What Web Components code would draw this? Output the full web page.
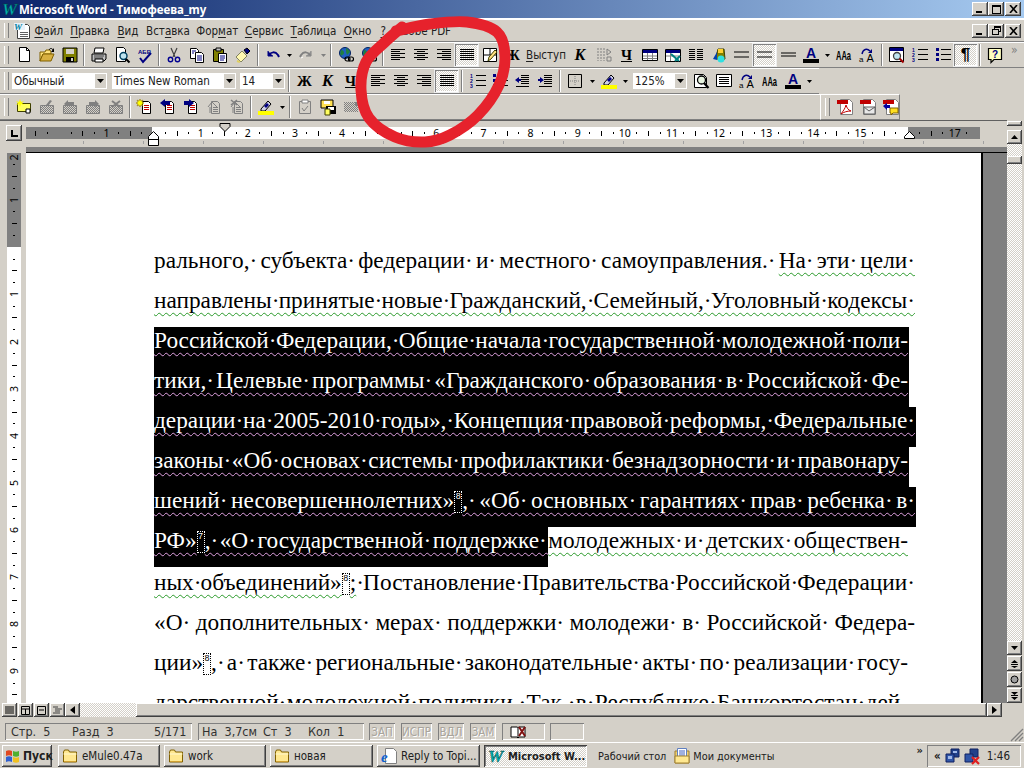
<!DOCTYPE html>
<html lang="ru"><head><meta charset="utf-8"><title>Microsoft Word</title>
<style>
html,body{margin:0;padding:0;width:1024px;height:768px;overflow:hidden;background:#d4d0c8;font:11.5px "DejaVu Sans Condensed","Noto Sans",sans-serif;color:#000}
</style></head><body>
<x-app>
<x-titlebar slot="x">Microsoft Word - Тимофеева_my</x-titlebar>
<x-menubar>
 <x-m u="Ф" r="айл" w="35.500"></x-m><x-m u="П" r="равка" w="47"></x-m><x-m u="В" r="ид" w="29"></x-m><x-m l="Вст" u="а" r="вка" w="51"></x-m><x-m l="Фор" u="м" r="ат" w="47.500"></x-m><x-m u="С" r="ервис" w="46.500"></x-m><x-m u="Т" r="аблица" w="52"></x-m><x-m u="О" r="кно" w="36"></x-m><x-m u="?" r="" w="15.500"></x-m><x-m r="Adobe PDF" w="64"></x-m>
</x-menubar>
<x-tb style="--h:26px">
 <x-btn i="new"></x-btn><x-btn i="open"></x-btn><x-btn i="save"></x-btn><x-sep></x-sep>
 <x-btn i="print"></x-btn><x-btn i="preview"></x-btn><x-btn i="spell"></x-btn><x-sep></x-sep>
 <x-btn i="cut"></x-btn><x-btn i="copy"></x-btn><x-btn i="paste"></x-btn><x-btn i="brush"></x-btn><x-sep w="7"></x-sep>
 <x-btn i="undo"></x-btn><x-btn i="drop" w="10"></x-btn><x-btn i="redo"></x-btn><x-btn i="dropg" w="11"></x-btn><x-sep w="6"></x-sep>
 <x-btn i="globe"></x-btn><x-btn i="globe"></x-btn><x-sep></x-sep>
 <x-btn i="al"></x-btn><x-btn i="ac"></x-btn><x-btn i="ar"></x-btn><x-btn i="aj" on></x-btn><x-btn i="tdraw"></x-btn>
 <x-btn t="b">Ж</x-btn><x-btn w="44"><x-u>В</x-u>ыступ</x-btn><x-btn t="bi" w="24">К</x-btn><x-btn i="gr"></x-btn><x-btn t="bu">Ч</x-btn>
 <x-btn i="table"></x-btn><x-btn i="xl"></x-btn><x-btn i="cols"></x-btn><x-btn i="art"></x-btn><x-btn i="eq2"></x-btn><x-btn i="eq2" on></x-btn><x-btn i="eq1"></x-btn>
 <x-btn i="fontA"></x-btn><x-btn i="drop" w="10"></x-btn><x-btn i="aaa"></x-btn><x-btn i="swap"></x-btn><x-sep w="7"></x-sep>
 <x-btn i="zoomdoc"></x-btn><x-btn i="num"></x-btn><x-btn i="bul"></x-btn><x-btn t="pil" on>¶</x-btn><x-sep></x-sep><x-btn i="help"></x-btn>
 <x-chev>»</x-chev>
</x-tb>
<x-tb style="--h:26px;--w:819px">
 <x-combo w="95" v="Обычный"></x-combo><x-spacer w="5"></x-spacer><x-combo w="124" v="Times New Roman"></x-combo><x-spacer w="4"></x-spacer><x-combo w="45" v="14"></x-combo><x-sep w="8"></x-sep>
 <x-btn t="b">Ж</x-btn><x-btn t="bi">К</x-btn><x-btn t="bu">Ч</x-btn><x-sep w="4"></x-sep>
 <x-btn i="al"></x-btn><x-btn i="ac"></x-btn><x-btn i="ar"></x-btn><x-btn i="aj" on></x-btn><x-sep w="8"></x-sep>
 <x-btn i="num"></x-btn><x-btn i="bul" w="21"></x-btn><x-btn i="outd"></x-btn><x-btn i="ind"></x-btn><x-sep w="7"></x-sep>
 <x-btn i="border"></x-btn><x-btn i="drop" w="11"></x-btn><x-btn i="hl"></x-btn><x-btn i="drop" w="10"></x-btn><x-spacer w="3"></x-spacer>
 <x-combo w="54" v="125%"></x-combo><x-spacer w="2"></x-spacer><x-btn i="zoomdoc2"></x-btn><x-btn i="lines"></x-btn><x-btn i="swap"></x-btn><x-btn i="aaa"></x-btn><x-btn i="fontA"></x-btn><x-btn i="drop" w="10"></x-btn>
</x-tb>
<x-row>
 <x-tb style="--h:26px;--w:820px">
  <x-btn i="cmt"></x-btn><x-btn i="cmtg"></x-btn><x-btn i="cmtl"></x-btn><x-btn i="cmtr"></x-btn><x-btn i="cmtx"></x-btn><x-sep></x-sep>
  <x-btn i="trk"></x-btn><x-btn i="trkl"></x-btn><x-btn i="trkr"></x-btn><x-btn i="trkg"></x-btn><x-btn i="trkx"></x-btn><x-sep></x-sep>
  <x-btn i="hl"></x-btn><x-btn i="drop" w="10"></x-btn><x-sep></x-sep><x-btn i="clip"></x-btn><x-btn i="docsv"></x-btn><x-btn i="grb"></x-btn>
 </x-tb>
 <x-tb style="--h:26px;--w:80px" band><x-btn i="pdf"></x-btn><x-btn i="pdfm"></x-btn><x-btn i="pdfc"></x-btn></x-tb>
</x-row>
<x-main>
 <x-line w="761">ральногo,· субъекта· федерации· и· местного· самоуправления.· <x-w>На· эти· цели·</x-w></x-line>
 <x-line w="761" wave="g">направлены· принятые· новые· Гражданский,· Семейный,· Уголовный· кодексы·</x-line>
 <x-line w="754" sel wave="p">Российской· Федерации,· Общие· начала· государственной· молодежной· поли-</x-line>
 <x-line w="754" sel wave="p">тики,· Целевые· программы· «Гражданского· образования· в· Российской· Фе-</x-line>
 <x-line w="761" sel wave="p">дерации· на· 2005-2010· годы»,· Концепция· правовой· реформы,· Федеральные·</x-line>
 <x-line w="754" sel wave="p">законы· «Об· основах· системы· профилактики· безнадзорности· и· правонару-</x-line>
 <x-line w="761" sel wave="p">шений· несовершеннолетних»<x-fn>8</x-fn>,· «Об· основных· гарантиях· прав· ребенка· в·</x-line>
 <x-line w="754"><x-sel>РФ»<x-fn>7</x-fn>,· «О· государственной· поддержке· </x-sel><x-w>молодежных· и· детских· обществен-</x-w></x-line>
 <x-line w="761" style="margin-top:2px"><x-w>ных· объединений»<x-fn>8</x-fn>;</x-w>· Постановление· Правительства· Российской· Федерации·</x-line>
 <x-line w="761">«О· дополнительных· мерах· поддержки· молодежи· в· Российской· Федера-</x-line>
 <x-line w="754">ции»<x-fn>8</x-fn>,· а· также· региональные· законодательные· акты· по· реализации· госу-</x-line>
 <x-line w="754">дарственной· молодежной· политики.· Так,· в· Республике· Башкортостан· дей-</x-line>
</x-main>
<x-status></x-status>
<x-taskbar></x-taskbar>
<x-scribble></x-scribble>
</x-app>
<script>
const UI='"DejaVu Sans Condensed","Noto Sans",sans-serif';
const DITH='repeating-conic-gradient(#fff 0 25%,#d4d0c8 0 50%) 0 0/2px 2px';
const raised='box-shadow:inset -1px -1px #404040,inset 1px 1px #fff,inset -2px -2px #808080;';
const sunken='box-shadow:inset 1px 1px #808080,inset -1px -1px #fff;';
const lines=(a,c='#000')=>a.map(([x,y,w])=>`<rect x="${x}" y="${y}" width="${w}" height="1" fill="${c}"/>`).join('');
const page='<path d="M3.500 .5h7l3 3v11h-10z" fill="#fff" stroke="#000"/><path d="M10.500 .5v3h3" fill="none" stroke="#000"/>';
const gd=`<pattern id="gd" width="2" height="2" patternUnits="userSpaceOnUse"><rect width="2" height="2" fill="#d4d0c8"/><rect width="1" height="1" fill="#808080"/><rect x="1" y="1" width="1" height="1" fill="#808080"/></pattern>`;
const trk=(a)=>`<path d="M5.500 2.500h6l2 2v10h-8z" fill="#fff" stroke="#000"/>`+lines([[7,6,5],[7,8,5],[7,10,5]],'#c00000')+a;
const trkg=`<path d="M5.500 2.500h6l2 2v10h-8z" fill="#d4d0c8" stroke="#808080"/><path d="M2 8l4-5 5 5M4 8v6" fill="none" stroke="#808080"/>`+lines([[7,8,5],[7,10,5],[7,12,5]],'#808080');
const I={
new:page,
mdoc:'<path d="M3.500 1.500h10l2 2v12h-12z" fill="#fff" stroke="#404040"/>'+lines([[6,9,8],[6,11,8],[6,13,8]],'#606060')+'<rect x="0" y="0" width="11" height="7" fill="#e8f0f8"/><text x="0" y="7" font-size="9" font-weight="700" font-style="italic" font-family="Liberation Serif" fill="#0080a0">W</text>',
open:'<path d="M1 5h5l1-2h4l1 2v2H4L1 14z" fill="#ffe27a" stroke="#806000"/><path d="M1 14l3-7h11l-3 7z" fill="#d8b040" stroke="#806000"/><path d="M10 3c1-2 3-2 4 0" fill="none" stroke="#000"/><path d="M15 1v4h-3z"/>',
save:'<path d="M1 1h14v14H1z" fill="#808000" stroke="#000"/><path d="M4 2h8v5H4z" fill="#d4d0c8"/><path d="M4 10h8v5H4z" fill="#000"/><path d="M9 11h2v3H9z" fill="#d4d0c8"/>',
print:'<path d="M4 1h9l-1 5H3z" fill="#fff" stroke="#000"/><path d="M1 7h14v5l-2 2H1z" fill="#c0c0c0" stroke="#000"/><path d="M3 9h10M3 11h9" stroke="#404040"/><path d="M4 12h8v3H4z" fill="#fff" stroke="#000"/>',
preview:'<path d="M2.500 .5h7l2 2v12h-9z" fill="#fff" stroke="#000"/><circle cx="9.500" cy="9" r="3.500" fill="#bfe4f0" stroke="#004060" stroke-width="1.400"/><path d="M12 12l3.500 3.500" stroke="#000" stroke-width="2"/>',
spell:'<text x="1" y="6.500" font-size="6" font-weight="700" font-family="Liberation Sans" fill="#000080">АБВ</text><path d="M3 11l3 4 8-9" fill="none" stroke="#000080" stroke-width="2"/>',
cut:'<path d="M5 1l4 9M11 1L7 10" stroke="#404040" stroke-width="1.200"/><circle cx="4.500" cy="12.500" r="2.200" fill="none" stroke="#000090" stroke-width="1.400"/><circle cx="11.500" cy="12.500" r="2.200" fill="none" stroke="#000090" stroke-width="1.400"/>',
copy:'<path d="M1.500 1.500h6l2 2v8h-8z" fill="#fff" stroke="#000"/><path d="M6.500 5.500h6l2 2v8h-8z" fill="#fff" stroke="#000"/><path d="M3 4h4M3 6h2M8 9h5M8 11h5M8 13h5" stroke="#000080"/>',
paste:'<path d="M1.500 2.500h10v12h-10z" fill="#808000" stroke="#000"/><path d="M4 1h5v3H4z" fill="#c0c0c0" stroke="#000"/><path d="M6.500 6.500h8v9h-8z" fill="#fff" stroke="#000"/><path d="M8 9h5M8 11h5M8 13h4" stroke="#000080"/>',
brush:'<path d="M1 10l6-6 5 5-6 6z" fill="#fff8b0" stroke="#808060"/><path d="M9 3l3-2 3 3-3 3z" fill="#000080" stroke="#000"/><path d="M2 14l3 1" stroke="#e0d060" stroke-width="2"/>',
undo:'<path d="M3 4v5h5" fill="#000080" stroke="#000080"/><path d="M4 8c2-3 6-4 9 0l1 2" fill="none" stroke="#000080" stroke-width="2"/>',
redo:'<path d="M13 4v5H8" fill="#a0a0a0" stroke="#808080"/><path d="M12 8c-2-3-6-4-9 0l-1 2" fill="none" stroke="#808080" stroke-width="2"/><path d="M3 11l2-1" stroke="#fff"/>',
drop:'<path d="M-1 7h5l-2.500 3z" transform="translate(7)"/>',
dropg:'<path d="M-1 7h5l-2.500 3z" transform="translate(7)" fill="#808080"/>',
globe:'<circle cx="7" cy="6" r="5.500" fill="#2060c0" stroke="#002060"/><path d="M3 3c2 0 3 1 3 3s-2 1-2 3l-2-2zM8 1c2 2 3 1 4 4l-3 3-1-3z" fill="#208040"/><rect x="7" y="10" width="5" height="4" rx="2" fill="none" stroke="#000" stroke-width="1.200"/><rect x="10.500" y="10" width="5" height="4" rx="2" fill="none" stroke="#000" stroke-width="1.200"/>',
al:lines([[1,2,14],[1,4,9],[1,6,14],[1,8,9],[1,10,14],[1,12,9]]),
ac:lines([[1,2,14],[4,4,8],[1,6,14],[4,8,8],[1,10,14],[4,12,8]]),
ar:lines([[1,2,14],[6,4,9],[1,6,14],[6,8,9],[1,10,14],[6,12,9]]),
aj:lines([[1,2,14],[1,4,14],[1,6,14],[1,8,14],[1,10,14],[1,12,14]]),
tdraw:'<path d="M1.500 1.500h13v13h-13zM1.500 8h13M8 1.500V8" fill="#fff" stroke="#000"/><path d="M6 14l1-4 6-7 2 2-6 7z" fill="#ffe080" stroke="#404000"/>',
gr:'<path d="M2 1v13M5 1v13M8 1v13" stroke="#808080" stroke-dasharray="2 1"/><path d="M11 2l4 3-4 3zM11 10h4v4h-4z" fill="#d4d0c8" stroke="#808080"/>',
table:'<path d="M.5 2.500h15v11H.5z" fill="#fff" stroke="#000"/><path d="M1 3h14v3H1z" fill="#000080"/><path d="M1 9h14M1 11.500h14M5.500 6v7M10.500 6v7" stroke="#808080"/>',
xl:'<path d="M.5 2.500h15v12H.5z" fill="#fff" stroke="#000"/><path d="M1 3h14v3H1z" fill="#000080"/><path d="M1 9h14M5.500 6v8" stroke="#808080"/><path d="M6 7l8 7M10 14l5-5" stroke="#008080" stroke-width="2"/>',
cols:lines([[1,2,6],[1,4,6],[1,6,6],[1,8,6],[1,10,6],[1,12,6],[9,2,6],[9,4,6],[9,6,6],[9,8,6],[9,10,6],[9,12,6]]),
art:'<path d="M7 2h6l1 10-6 2-3-4z" fill="#808000" stroke="#404000"/><path d="M7 2h5v4H7z" fill="#ffd030"/><path d="M2 12l4-7v8z" fill="#0040b0"/><circle cx="10" cy="12" r="3.500" fill="#30e0e0"/>',
eq2:'<path d="M0 5h15M0 10h15" stroke="#000" stroke-width="1.200"/>',
eq1:'<path d="M1 6h15M1 9h15" stroke="#000"/>',
fontA:'<text x="8" y="11" text-anchor="middle" font-size="14" font-weight="700" font-family="Liberation Sans" fill="#000080">A</text><rect x="0" y="12" width="16" height="4" fill="#000"/>',
aaa:'<g transform="scale(.58 1)"><text x="0" y="13" font-size="13" font-weight="700" font-family="Liberation Sans">AAa</text></g>',
swap:'<path d="M3 7C4 2 8 1 11 4" fill="none" stroke="#000080" stroke-width="1.400"/><path d="M13 2v4H9z" fill="#000080"/><text x="0" y="14.500" font-size="8" font-family="Liberation Sans">a<tspan dx="3" font-size="11">A</tspan></text>',
zoomdoc:'<path d="M.5 .5h14v14H.5z" fill="#fff" stroke="#000"/><path d="M1 1h13v3H1z" fill="#000080"/><circle cx="8" cy="9" r="3.500" fill="#bfe4f0" stroke="#404040" stroke-width="1.300"/><path d="M10.500 11.500l4 4" stroke="#a00000" stroke-width="2"/>',
zoomdoc2:'<path d="M1.500 1.500h9l3 3v10h-12z" fill="#fff" stroke="#000"/><circle cx="8.500" cy="7" r="4" fill="#e8f4e0" stroke="#000" stroke-width="1.300"/><path d="M11 10l4.500 5" stroke="#000" stroke-width="2.200"/>',
num:'<text x="0" y="5" font-size="5" fill="#000080" font-weight="700" font-family="Liberation Sans">1</text><text x="0" y="10" font-size="5" fill="#000080" font-weight="700" font-family="Liberation Sans">2</text><text x="0" y="15" font-size="5" fill="#000080" font-weight="700" font-family="Liberation Sans">3</text>'+lines([[6,2,10],[6,7,10],[6,12,10]]),
bul:'<path d="M1 1h3v3H1zM1 6h3v3H1zM1 11h3v3H1z" fill="#000080"/>'+lines([[6,2,10],[6,7,10],[6,12,10]]),
outd:lines([[7,2,8],[7,4,8],[7,6,8],[7,8,8],[7,10,8],[2,13,13]])+'<path d="M1 7l4-3v2h2v2H5v2z" fill="#000080"/>',
ind:lines([[7,2,8],[7,4,8],[7,6,8],[7,8,8],[7,10,8],[2,13,13]])+'<path d="M7 7L3 4v2H1v2h2v2z" fill="#000080"/>',
border:'<path d="M1.500 1.500h13v13h-13z" fill="none" stroke="#000"/><path d="M8 3v10M3 8h10" stroke="#808080" stroke-dasharray="1 1"/>',
hl:'<path d="M3 10L10 2l3 3-6 7H3z" fill="#d0d0e8" stroke="#000"/><path d="M6 7l3-3 2 2-3 3z" fill="#000080"/><rect y="12" width="16" height="4" fill="#ffff00"/>',
lines:'<path d="M.5 1.500h15v12H.5z" fill="#fff" stroke="#000"/>'+lines([[3,4,10],[3,6,10],[3,8,10],[3,10,10]]),
help:'<path d="M1.500 1.500h13v11H7l-3 3v-3H1.500z" fill="#ffffc0" stroke="#000" stroke-width="1.200"/><text x="8" y="11" text-anchor="middle" font-size="10" font-weight="700" font-family="Liberation Sans" fill="#000080">?</text>',
cmt:'<path d="M1.500 4.500h13v8h-13z" fill="#ffff60" stroke="#404000"/><path d="M10 10h4v4h-4z" fill="#fff" stroke="#000"/><path d="M4 0l1 3 3-1-2 2 2 2-3-1-1 3-1-3-3 1 2-2-2-2 3 1z" fill="#ffff00"/>',
cmtg:gd+'<path d="M1.500 6.500h13v8h-13z" fill="url(#gd)" stroke="#808080"/><path d="M7 6l4-5 2 1-4 5z" fill="#808080"/>',
cmtl:gd+'<path d="M1.500 6.500h13v8h-13z" fill="url(#gd)" stroke="#808080"/><path d="M2 5l4-4v2h6v3H6v2z" fill="#808080"/>',
cmtr:gd+'<path d="M1.500 6.500h13v8h-13z" fill="url(#gd)" stroke="#808080"/><path d="M14 5l-4-4v2H4v3h6v2z" fill="#808080"/>',
cmtx:gd+'<path d="M1.500 6.500h13v8h-13z" fill="url(#gd)" stroke="#808080"/><path d="M4 2l8 6M12 2L4 8" stroke="#808080" stroke-width="2"/>',
trk:trk('<path d="M3 0l1 2 2-1-1 2 2 1-2 1 1 2-2-1-1 2-1-2-2 1 1-2-2-1 2-1-1-2 2 1z" fill="#ffff00" stroke="#806000" stroke-width=".5"/>'),
trkl:trk('<path d="M0 4l5-4v2h5v4H5v2z" fill="#000080"/>'),
trkr:trk('<path d="M11 4L6 0v2H1v4h5v2z" fill="#000080"/>'),
trkg:trkg,
trkx:trkg+'<path d="M2 1l6 5M8 1L2 6" stroke="#808080" stroke-width="1.500"/>',
clip:'<path d="M2.500 2.500h11v12h-11z" fill="#d4d0c8" stroke="#808080"/><path d="M5 1h6v3H5z" fill="#fff" stroke="#808080"/><path d="M5 9l2 3 4-5" fill="none" stroke="#808080"/>',
docsv:'<path d="M1 1h12v8H1z" fill="#ffe050" stroke="#000"/><path d="M4 2h6v3H4z" fill="#fff"/><path d="M6 7h10v8H6z" fill="#000"/><path d="M8 8h6v3H8z" fill="#fff"/><path d="M5 10h5v6H5z" fill="#ffff60" stroke="#404000"/>',
grb:gd+'<path d="M1 3h14v10H1z" fill="url(#gd)"/><path d="M12 3h4v4h-4z" fill="#808080"/>',
pdf:'<path d="M3.500 .5h9l3 3v12h-12z" fill="#fff" stroke="#808080"/><rect y="1" width="11" height="4" fill="#c00000"/><path d="M9 6c-1 4-3 6-5 9 3-2 6-3 10-3-3-1-4-3-5-6z" fill="none" stroke="#c00000"/>',
pdfm:'<path d="M3.500 .5h9l3 3v12h-12z" fill="#fff" stroke="#808080"/><rect y="1" width="11" height="4" fill="#c00000"/><path d="M4 8h11v7H4z" fill="#e8e8e8" stroke="#606060"/><path d="M4 8l5 4 6-4" fill="none" stroke="#606060"/>',
pdfc:'<path d="M3.500 .5h9l3 3v12h-12z" fill="#fff" stroke="#808080"/><rect y="1" width="11" height="4" fill="#c00000"/><path d="M0 7l4-3v2h3v3H4v2z" fill="#0000a0"/><path d="M7 9h8v5H10l-2 2v-2H7z" fill="#ffe020" stroke="#806000"/>',
folder:'<path d="M1.500 4l1-2h4l1 2h7v10h-13z" fill="#ffe890" stroke="#806000"/><path d="M1.500 6h13" stroke="#fff8d0"/><path d="M2 13.500h12" stroke="#d0a030"/>',
ie:'<path d="M4.500 .5h8l3 3v12h-11z" fill="#fff" stroke="#808080"/><text x="0" y="14" font-size="15" font-weight="700" font-style="italic" font-family="Liberation Serif" fill="#1060d0">e</text>',
wordw:'<text x="0" y="14" font-size="17" font-weight="700" font-style="italic" font-family="Liberation Serif" fill="#00b0b0" stroke="#004040" stroke-width=".4">W</text>',
flag:'<path d="M1 3c2-1 4-1 6 0v5c-2-1-4-1-6 0z" fill="#e04820"/><path d="M8 3c2 1 4 1 6 0v5c-2 1-4 1-6 0z" fill="#50b030"/><path d="M1 9c2-1 4-1 6 0v5c-2-1-4-1-6 0z" fill="#3060d0"/><path d="M8 9c2 1 4 1 6 0v5c-2 1-4 1-6 0z" fill="#f0c020"/>',
docs:'<path d="M1 3h14v12H1z" fill="#f0d070" stroke="#a08030"/><path d="M3.500 .5h9v11h-9z" fill="#fff" stroke="#6080c0"/><path d="M5 3h6M5 5h6M5 7h6" stroke="#4060c0"/><path d="M1 8h14v7H1z" fill="#ffe890" stroke="#a08030"/>',
net:'<path d="M6 1h8v8H6z" fill="#20408a" stroke="#102060"/><path d="M1 6h8v8H1z" fill="#3056a8" stroke="#102060"/><path d="M3 8h4v3H3z" fill="#a0b8e8"/><path d="M8 3h4v2H8z" fill="#a0b8e8"/>',
netx:'<path d="M6 1h8v8H6z" fill="#20408a" stroke="#102060"/><path d="M1 6h8v8H1z" fill="#3056a8" stroke="#102060"/><path d="M8 9l7 7M15 9l-7 7" stroke="#e02020" stroke-width="2.200"/>',
book:'<path d="M1 3h6c1 0 1 1 1 1s0-1 1-1h6v10H9l-1 1-1-1H1z" fill="#fff" stroke="#000"/><path d="M8 4v9" stroke="#000"/><path d="M9 3l6 9M15 3l-6 9" stroke="#801010" stroke-width="2"/>',
};
const svg=(n,s=16)=>`<svg width="${s}" height="${s}" viewBox="0 0 16 16" style="display:block;overflow:visible">${I[n]||''}</svg>`;
function def(name,css,html,extra={}){
 class E extends HTMLElement{
  constructor(){super();this.attachShadow({mode:'open'})}
  connectedCallback(){const a=n=>this.getAttribute(n);this.shadowRoot.innerHTML=`<style>${css}</style>`+(typeof html==='function'?html(a,this):html);if(extra.init)extra.init(this,a)}
 }
 customElements.define(name,E);
}
def('x-app',':host{display:flex;flex-direction:column;width:1024px;height:768px;position:relative;overflow:hidden;background:#d4d0c8}','<slot name="x"></slot><slot></slot>');
const capBtn=(g)=>`<span class="cb">${g}</span>`;
const CB=`.cb{width:16px;height:14px;background:#d4d0c8;${raised}display:flex;align-items:center;justify-content:center}`;
const gMin='<svg width="8" height="8"><rect y="6" width="6" height="2"/></svg>',gMax='<svg width="9" height="9"><path d="M0 0h9v9H0zM1 2v6h7V2z" fill-rule="evenodd"/></svg>',gRes='<svg width="9" height="9"><path d="M2 0h7v6H7v3H0V3h2zM3 1v1h5v3H7V3H3zM1 4v4h5V4z" fill-rule="evenodd"/></svg>',gX='<svg width="9" height="8"><path d="M1 0l7 8M8 0L1 8" stroke="#000" stroke-width="1.600"/></svg>';
def('x-titlebar',`:host{display:flex;align-items:center;height:18px;flex:none;background:linear-gradient(90deg,#0a246a 0,#a6caf0 100%);color:#fff;font:700 11.5px "Noto Sans",sans-serif;border-bottom:1px solid #fff}
 .ic{width:16px;margin:0 0 0 2px}.t{flex:1;white-space:nowrap;margin-left:1px}.btns{display:flex;margin-right:3px}${CB}.cb:last-child{margin-left:1px}`,
 ()=>`<span class="ic">${svg('wordw')}</span><span class="t"><slot></slot></span><span class="btns">${capBtn(gMin)}${capBtn(gMax)}${capBtn(gX)}</span>`);
const GRIP=`<span class="gr"></span>`;
const GRIPC=`.gr{width:3px;height:calc(100% - 6px);margin:0 3px 0 4px;flex:none;border-left:1px solid #fff;border-right:1px solid #808080;background:#d4d0c8}`;
def('x-menubar',`:host{display:flex;align-items:center;height:23px;flex:none;border-bottom:1px solid #808080;box-sizing:border-box;border-top:1px solid #fff}${GRIPC}
 .g{display:flex;align-items:center;height:100%;flex:1}.doc{margin:0 1px 0 2px;width:16px;flex:none}.btns{display:flex;margin-right:3px}${CB}.cb:last-child{margin-left:1px}`,
 ()=>`${GRIP}<span class="doc">${svg('mdoc')}</span><span class="g"><slot></slot></span><span class="btns">${capBtn(gMin)}${capBtn(gRes)}${capBtn(gX)}</span>`);
def('x-m',':host{display:inline-block;text-align:center;white-space:nowrap;color:#202020;flex:none}u{text-underline-offset:2px}',(a,t)=>{t.style.width=a('w')+'px';return `${a('l')||''}<u>${a('u')||''}</u>${a('r')||''}`});
def('x-u',':host{text-decoration:underline;text-underline-offset:2px}','<slot></slot>');
def('x-tb',`:host{display:flex;align-items:center;height:var(--h);width:var(--w,100%);flex:none;box-sizing:border-box;border-top:1px solid #fff;border-bottom:1px solid #808080;position:relative}
 :host([band]){border-left:1px solid #fff;border-right:1px solid #808080}${GRIPC}`,`${GRIP}<slot></slot>`);
def('x-row',':host{display:flex;height:26px;flex:none;width:100%}','<slot></slot>');
def('x-sep',':host{display:flex;justify-content:center;height:22px;align-items:center;flex:none}i{width:0;height:22px;border-left:1px solid #808080;border-right:1px solid #fff}',(a,t)=>{t.style.width=(a('w')||6)+'px';return '<i></i>'});
def('x-spacer',':host{display:block;flex:none}','',{init:(t,a)=>t.style.width=a('w')+'px'});
def('x-chev',`:host{margin-left:5px;color:#808080;font:12px ${UI};align-self:flex-start;letter-spacing:0}`,'<slot></slot>');
def('x-btn',`:host{display:flex;align-items:center;justify-content:center;width:23px;height:22px;flex:none;box-sizing:border-box;white-space:nowrap;color:#202020}
 :host([on]){background:${DITH};box-shadow:inset 1px 1px #808080,inset -1px -1px #fff,0 0 0 1px #eee}
 .b{font:700 15px "Liberation Serif",serif;color:#000}.bi{font:italic 700 16px "Liberation Serif",serif;color:#000}.bu{font:700 15px "Liberation Serif",serif;text-decoration:underline;color:#000}.pil{font:700 17px "Liberation Sans",sans-serif;color:#000}`,
 (a,t)=>{if(a('w'))t.style.width=a('w')+'px';const i=a('i');return i?svg(i):a('t')?`<span class="${a('t')}"><slot></slot></span>`:'<slot></slot>'});
def('x-combo',`:host{display:flex;height:16px;box-sizing:border-box;flex:none;background:#fff;font:11.5px ${UI};align-items:center;padding-left:2px;white-space:nowrap;overflow:hidden;color:#222}
 .v{flex:1}.d{width:13px;height:100%;background:#d4d0c8;display:flex;align-items:center;justify-content:center;border:1px solid #fff;box-sizing:border-box}`,
 (a,t)=>{t.style.width=a('w')+'px';return `<span class="v">${a('v')}</span><span class="d"><svg width="7" height="4"><path d="M0 0h7L3.500 4z"/></svg></span>`});
/* ruler */
const Q=47.13/4;
function ticks(from,to){let h='';for(let k=from;k<=to;k++){const m=((k%4)+4)%4;let c='';
 if(m===0&&k!==0&&k!==64&&k!==-8)c=`<b>${Math.abs(k/4)}</b>`;else if(m===2)c='<i class="l"></i>';else if(m)c='<i class="d"></i>';
 h+=`<span class="c">${c}</span>`}return h}
def('x-hruler',`:host{display:block;height:32px;flex:none;position:relative;border-top:1px solid #606060;box-sizing:border-box}
 .top{display:flex;height:18px;align-items:flex-end;padding-left:6px}
 .tab{width:16px;height:16px;margin:0 4px 0 0;${raised}display:flex;align-items:center;justify-content:center;align-self:flex-start;margin-top:4px;flex:none}
 .strip{width:954px;height:12px;flex:none;overflow:hidden;display:flex;align-items:center;padding-left:3.900px;box-sizing:border-box;background:linear-gradient(90deg,#808080 126px,#fff 126px,#fff 882px,#808080 882px)}
 .c{width:${Q}px;flex:none;display:flex;align-items:center;justify-content:center;font:10.5px "Noto Sans",sans-serif;color:#000}.c b{font-weight:400}
 .d{width:1px;height:2px;background:#000}.l{width:1px;height:5px;background:#000}
 .mid{height:8px;margin-left:26px;background:repeating-linear-gradient(90deg,transparent 0 59px,#a0a0a0 59px 60px) -2px 2px/100% 3px no-repeat}
 .band{height:5px;margin-left:26px;background:#808080}
 .mk{position:absolute}`,
 ()=>`<div class="top"><span class="tab"><svg width="8" height="8"><path d="M1 1h2v5h5v2H1z"/></svg></span><div class="strip">${ticks(-10,69)}</div></div><div class="mid"></div><div class="band"></div>
 <svg class="mk" style="left:147px;top:10px" width="13" height="16"><path d="M6.500 .5l5 5v9h-10v-9z" fill="#fff" stroke="#000"/><path d="M1 8.500h11" stroke="#000"/></svg>
 <svg class="mk" style="left:219px;top:2px" width="13" height="10"><path d="M1 .5h10v3l-5 5-5-5z" fill="#d4d0c8" stroke="#000"/></svg>
 <svg class="mk" style="left:903px;top:10px" width="13" height="9"><path d="M6.500 .5l5 5v2h-10v-2z" fill="#fff" stroke="#000"/></svg>`);
def('x-vruler',`:host{display:block;width:26px;flex:none;padding-left:7px;box-sizing:border-box;overflow:hidden}
 .s{width:14px;height:100%;overflow:hidden;background:linear-gradient(180deg,#808080 94px,#fff 94px);display:flex;flex-direction:column;align-items:center;margin-top:1px}
 .c{height:${Q}px;flex:none;display:flex;align-items:center;justify-content:center;font:10.5px "Noto Sans",sans-serif;width:14px}.c b{font-weight:400;transform:rotate(-90deg)}
 .two{height:${Q/2}px;flex:none;font:10.5px/${Q/2+3}px "Noto Sans",sans-serif;overflow:visible;text-align:center}.two b{font-weight:400;display:inline-block;transform:rotate(-90deg)}
 .d{width:2px;height:1px;background:#000}.l{width:5px;height:1px;background:#000}`,()=>`<div class="s"><span class="two"><b>2</b></span>${ticks(-7,38)}</div>`);
def('x-main',`:host{display:block;height:583px;flex:none;overflow:hidden}
 .g{display:flex;height:583px}.left{display:flex;flex-direction:column;width:1007px;flex:none}
 .body{display:flex;height:551px;flex:none}
 .pagewrap{display:flex;flex:1;border-top:1px solid #000;background:#808080}
 .page{background:#fff;border-right:2px solid #000;padding:94px 0 0 128px;box-sizing:border-box;width:957px;overflow:hidden;flex:none}`,
 ()=>`<div class="g"><div class="left"><x-hruler></x-hruler><div class="body"><x-vruler></x-vruler><div class="pagewrap"><div class="page"><slot></slot></div></div></div></div><x-vscroll></x-vscroll></div>`);
const sb=`background:#d4d0c8;${raised}display:flex;align-items:center;justify-content:center;flex:none;`;
def('x-vscroll',`:host{display:flex;flex-direction:column;width:17px;height:583px;flex:none;box-sizing:border-box;padding:0 2px 0 0}
 .sp{height:5px;margin-top:1px;${raised}flex:none}.gap{height:4px;flex:none}
 .a{height:14px;${sb}}.track{flex:1;background:${DITH};display:flex;flex-direction:column}
 .th{height:8px;margin-top:12px;${sb}}.x{height:15px;margin-top:1px;${sb}}`,
 ()=>`<div class="sp"></div><div class="gap"></div><div class="a"><svg width="7" height="4"><path d="M3.500 0L7 4H0z"/></svg></div><div class="track"><div class="th"></div></div>
 <div class="a"><svg width="7" height="4"><path d="M0 0h7L3.500 4z"/></svg></div>
 <div class="x"><svg width="7" height="8"><path d="M3.500 0L7 3H0zM0 4h7v1H0zM0 6h7L3.500 8z" /></svg></div>
 <div class="x"><svg width="9" height="9"><circle cx="4.500" cy="4.500" r="3.500" fill="#a0a0a0" stroke="#000"/></svg></div>
 <div class="x"><svg width="7" height="8"><path d="M3.500 8L7 5H0zM0 3h7v1H0zM0 0h7L3.500 3z"/></svg></div>`);
def('x-line',`:host{display:block;height:40px;font:23.3px/26px "Liberation Serif",serif;white-space:pre;color:#000;box-sizing:border-box;padding-bottom:14px}
 :host([sel]){background:#000;color:#fff}
 :host([wave=g]) span{text-decoration:underline wavy #2a9a2a 1px;text-underline-offset:4px;text-decoration-skip-ink:none}
 :host([wave=p]) span{text-decoration:underline wavy #e0a0e0 1px;text-underline-offset:4px;text-decoration-skip-ink:none}`,
 '<span id="t"><slot></slot></span>',{init:(t,a)=>{t.style.width=(+a('w')+1)+'px'}});
def('x-w',':host{text-decoration:underline wavy #2a9a2a 1px;text-underline-offset:4px;text-decoration-skip-ink:none}','<slot></slot>');
def('x-sel',':host{display:inline-block;background:#000;color:#fff;padding-bottom:14px;text-decoration:underline wavy #e0a0e0 1px;text-underline-offset:4px;text-decoration-skip-ink:none}','<slot></slot>');
def('x-fn',':host{display:inline-block;width:8px;height:22px;outline:1px dotted currentColor;outline-offset:-1px;font:9px/10px "Liberation Sans",sans-serif;text-align:center;overflow:hidden;vertical-align:-5px;text-decoration:none}','<slot></slot>');
const panel=(w,ml,inner,dis)=>`<span class="p${dis?' dis':''}" style="width:${w}px;margin-left:${ml}px">${inner}</span>`;
def('x-status',`:host{display:block;flex:none}
 .h{display:flex;height:14px;padding-left:2px}
 .h>*{flex:none}.v{display:flex;gap:1px}.vb{width:15px;height:14px;${sb}}
 .ar{width:15px;height:14px;${sb}}.tr{width:56px;background:${DITH}}.th{width:851px;height:14px;${sb}}
 .pad{height:4px}
 .s{display:flex;height:21px;padding-top:2px;box-sizing:border-box;font:12.5px ${UI};color:#303030;position:relative}
 .p{${sunken}height:17px;flex:none;display:flex;align-items:center;box-sizing:border-box;white-space:pre}
 .dis{color:#a8a49c;justify-content:center;text-shadow:1px 1px #fff;font-size:11.500px}
 .grip{position:absolute;right:0;bottom:0}`,
 ()=>`<div class="h"><span class="v"><span class="vb"><svg width="9" height="9"><path d="M0 1h9M0 3h9M0 5h9M0 7h9" stroke="#000"/></svg></span><span class="vb"><svg width="9" height="9"><path d="M.5 .5h8v8h-8zM.5 3h8M4.500 3v5" fill="none" stroke="#000"/></svg></span><span class="vb"><svg width="9" height="9"><path d="M.5 .5h8v8h-8zM2 4h5" fill="none" stroke="#000"/></svg></span><span class="vb"><svg width="9" height="9"><path d="M0 1h5M2 3h7M2 5h5M0 7h7" stroke="#404040"/></svg></span></span><span class="ar"><svg width="5" height="8"><path d="M5 0v8L0 4z"/></svg></span><span class="tr"></span><span class="th"></span><span class="ar"><svg width="5" height="8"><path d="M0 0v8l5-4z"/></svg></span></div>
 <div class="pad"></div>
 <div class="s">
 ${panel(187,5,'<span style="margin-left:6px;width:61px">Стр.  5</span><span style="width:82px">Разд  3</span><span>5/171</span>')}
 ${panel(166,6,'<span style="margin-left:4px;width:61px">На  3,7см</span><span style="width:45px">Ст  3</span><span>Кол  1</span>')}
 ${panel(26,5,'ЗАП',1)}${panel(31,6,'ИСПР',1)}${panel(26,6,'ВДЛ',1)}${panel(26,6,'ЗАМ',1)}
 ${panel(43,6,'<span style="margin-left:8px">'+svg('book')+'</span>')}${panel(34,5,'')}
 <svg class="grip" width="14" height="14"><path d="M13 1L1 13M13 5L5 13M13 9L9 13" stroke="#808080" stroke-width="1.300"/></svg>
 </div>`);
const tk=(i,t,w,ml,on)=>`<span class="t${on?' on':''}" style="width:${w}px;margin-left:${ml}px"><span class="i">${svg(i)}</span><span class="x">${t}</span></span>`;
def('x-taskbar',`:host{display:flex;align-items:center;height:26px;flex:none;border-top:1px solid #fff;box-sizing:border-box;font:11.5px ${UI};color:#202020;white-space:nowrap;padding-top:1px}
 .start{width:50px;height:22px;margin-left:2px;${raised}display:flex;align-items:center;padding-left:3px;box-sizing:border-box;font-weight:700;font-size:12px;gap:2px;flex:none}
 .t{height:22px;${raised}display:flex;align-items:center;padding-left:4px;box-sizing:border-box;gap:4px;flex:none;overflow:hidden}
 .on{background:${DITH};box-shadow:inset 1px 1px #404040,inset -1px -1px #fff,inset 2px 2px #808080;font-weight:700;font-size:11px}
 .q{display:flex;align-items:center;margin-left:11px;gap:3px;flex:none;font-size:10.8px}
 .i{flex:none}.ch{margin-left:auto;font-weight:700;font-size:11px;margin-right:4px;align-self:flex-start}
 .tray{width:94px;height:22px;margin-right:3px;${sunken}display:flex;align-items:center;box-sizing:border-box;padding-left:7px;flex:none}
 .tray .net{margin-right:3px}.clk{margin-left:auto;margin-right:11px}`,
 ()=>`<span class="start">${svg('flag')}<span>Пуск</span></span>${tk('folder','eMule0.47a',102,6)}${tk('folder','work',102,4)}${tk('folder','новая',103,4)}${tk('ie','Reply to Topi...',103,4)}${tk('wordw','Microsoft W...',103,4,1)}
 <span class="q">Рабочий стол</span><span class="q" style="margin-left:8px">${svg('docs')}<span>Мои документы</span></span>
 <span class="ch">»</span><span class="tray"><b style="font-weight:700;margin-right:4px">«</b><span class="net">${svg('net')}</span><span class="net">${svg('netx')}</span><span class="clk">1:46</span></span>`);
def('x-scribble',':host{position:absolute;left:0;top:0;pointer-events:none}svg{display:block}',()=>{
 const p=[[396,31],[430,24],[467,22],[497,32],[505,56],[499,85],[478,115],[450,135],[425,142],[395,137],[369,118],[361,90],[366,62],[385,42],[402,27]];
 let d=`M${p[0]}`;for(let i=0;i<p.length-1;i++){const a=p[Math.max(i-1,0)],b=p[i],c=p[i+1],e=p[Math.min(i+2,p.length-1)];
  d+=`C${b[0]+(c[0]-a[0])/6} ${b[1]+(c[1]-a[1])/6} ${c[0]-(e[0]-b[0])/6} ${c[1]-(e[1]-b[1])/6} ${c[0]} ${c[1]}`}
 return `<svg width="1024" height="200"><path d="${d}" fill="none" stroke="#e6222c" stroke-width="11" stroke-linecap="round"/></svg>`});
/* fit every text line to its measured width */
document.querySelectorAll('x-line').forEach(l=>{
 const t=l.shadowRoot.getElementById('t'),n=(l.textContent.trim().match(/ /g)||[]).length,w=+l.getAttribute('w');
 const nat=t.getBoundingClientRect().width;
 l.style.wordSpacing=((w-nat)/n)+'px';
});
</script>
</body></html>
